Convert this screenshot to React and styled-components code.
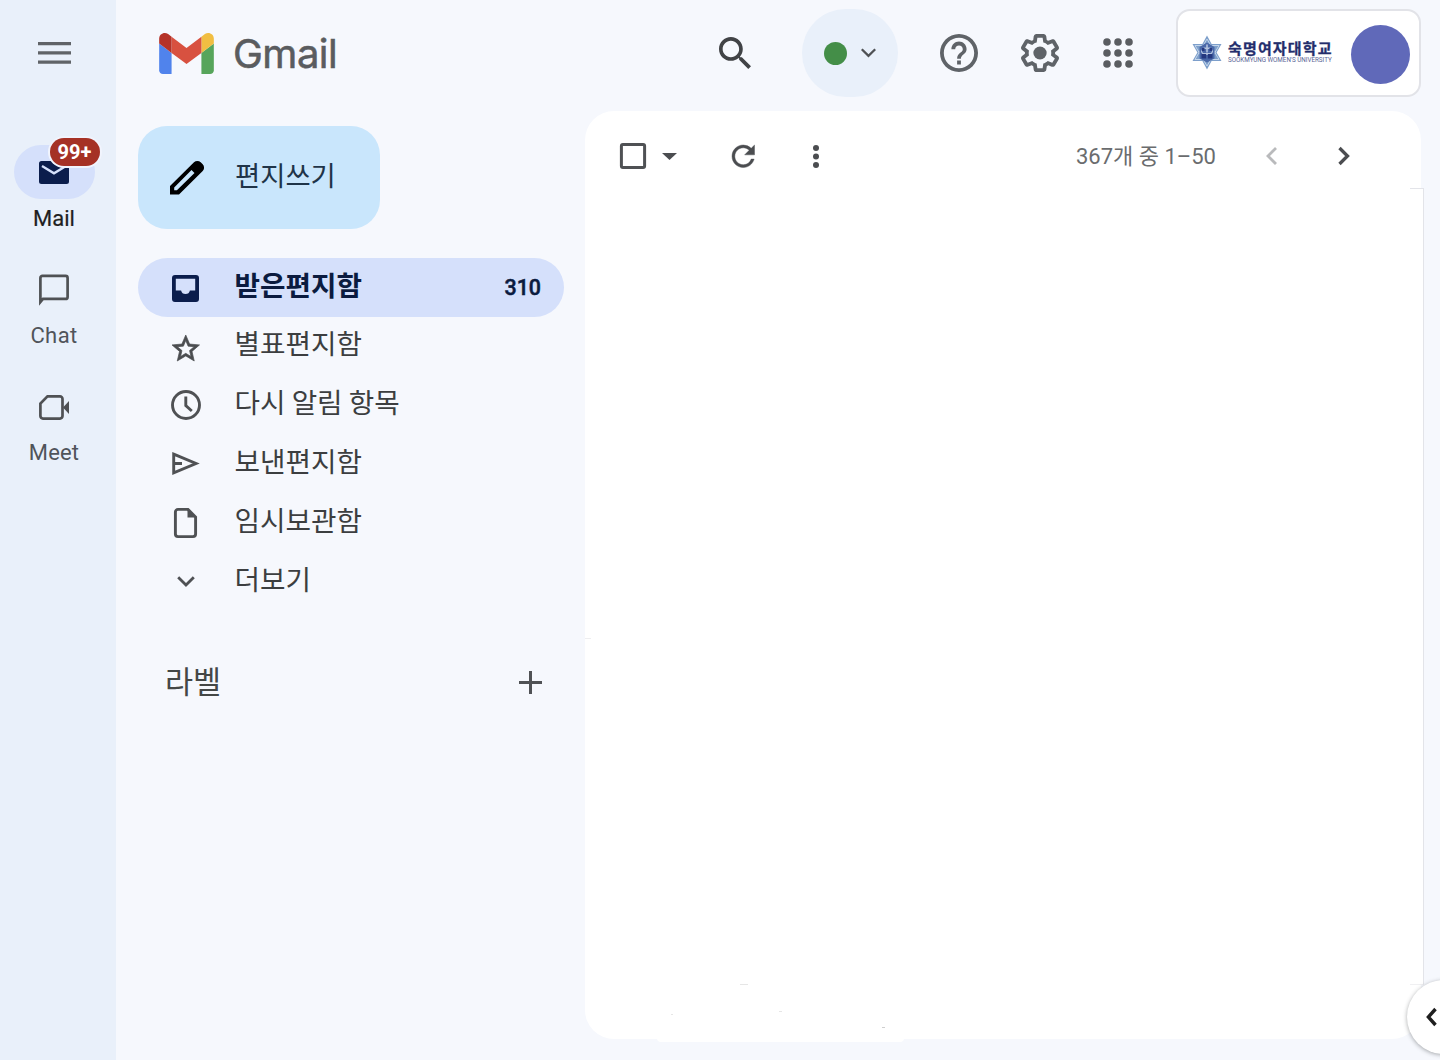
import React from "react";
import styled, { createGlobalStyle } from "styled-components";

const Global = createGlobalStyle`
  * { box-sizing: border-box; }
  html, body { margin: 0; padding: 0; }
  body { overflow: hidden; font-family: Roboto, "Noto Sans CJK KR", sans-serif; color: #444746; }
  button { border: 0; padding: 0; margin: 0; background: none; font: inherit; color: inherit; }
`;

const Page = styled.div`
  position: relative;
  display: flex;
  width: 1440px;
  height: 1060px;
  overflow: hidden;
  background: #f6f8fd;
`;

/* ---------- left rail ---------- */
const Rail = styled.nav`
  width: 116px;
  flex: none;
  display: flex;
  flex-direction: column;
  align-items: center;
  padding-right: 8px;
  background: #e9f0fa;
`;
const MenuButton = styled.button`
  height: 105px;
  display: flex;
  align-items: center;
  margin-bottom: 40px;
`;
const RailItem = styled.a`
  height: 117.5px;
  display: flex;
  flex-direction: column;
  align-items: center;
  color: ${(p) => (p.$active ? "#1f1f1f" : "#50545a")};
`;
const RailPill = styled.span`
  position: relative;
  width: 81px;
  height: 54px;
  border-radius: 27px;
  display: flex;
  align-items: center;
  justify-content: center;
  background: ${(p) => (p.$active ? "#d5e0fb" : "transparent")};
`;
const RailLabel = styled.span`
  font-size: 22px;
  line-height: 26px;
  margin-top: ${(p) => (p.$active ? 7 : 6)}px;
  letter-spacing: ${(p) => p.$spacing || "0"};
  -webkit-text-stroke: ${(p) => (p.$active ? "0.2px #1f1f1f" : "0")};
`;
const Badge = styled.span`
  position: absolute;
  left: 36px;
  top: -7px;
  width: 50px;
  height: 28px;
  border-radius: 14px;
  background: #a53125;
  box-shadow: 0 0 0 2px #f1f4fd;
  color: #fff;
  font-size: 20px;
  font-weight: 700;
  line-height: 29px;
  text-align: center;
`;

/* ---------- header ---------- */
const Body = styled.div`
  flex: 1;
  display: flex;
  flex-direction: column;
`;
const Header = styled.header`
  height: 111px;
  display: flex;
  align-items: flex-start;
  padding: 9px 19px 0 43px;
`;
const Brand = styled.div`
  height: 88px;
  width: 560px;
  display: flex;
  align-items: center;
  gap: 19px;
`;
const BrandName = styled.span`
  font-family: Inter, sans-serif;
  font-size: 40px;
  line-height: 48px;
  padding-top: 2px;
  letter-spacing: -0.5px;
  color: #5a5c5f;
  -webkit-text-stroke: 0.6px #5a5c5f;
`;
const HeaderIcon = styled.button`
  height: 88px;
  display: flex;
  align-items: center;
  margin-right: ${(p) => p.$after}px;
`;
const Status = styled.button`
  width: 96px;
  height: 88px;
  border-radius: 46px;
  background: #e9f0fa;
  display: flex;
  align-items: center;
  padding-left: 22px;
  gap: 14px;
  margin-right: 42px;
`;
const Dot = styled.span`
  width: 23px;
  height: 23px;
  border-radius: 50%;
  background: #448e48;
`;
const Account = styled.div`
  width: 245px;
  height: 88px;
  border: 2px solid #e2e3e8;
  border-radius: 14px;
  background: #fff;
  display: flex;
  align-items: center;
  padding: 2px 9px 0 14px;
`;
const School = styled.div`
  width: 105px;
  margin: 0 18px 4px 6px;
  display: flex;
  flex-direction: column;
  gap: 1px;
  white-space: nowrap;
  color: #232d6c;
`;
const SchoolName = styled.span`
  font-family: "Noto Sans CJK KR", sans-serif;
  font-weight: 700;
  font-size: 15px;
  line-height: 15px;
  letter-spacing: 1.15px;
  -webkit-text-stroke: 0.3px #232d6c;
`;
const SchoolSub = styled.span`
  font-family: Roboto, sans-serif;
  font-size: 6.3px;
  line-height: 8px;
  letter-spacing: -0.02px;
  color: #5a6596;
`;
const Avatar = styled.span`
  width: 59px;
  height: 59px;
  flex: none;
  border-radius: 50%;
  background: #6069b9;
`;

/* ---------- sidebar ---------- */
const Content = styled.div`
  flex: 1;
  display: flex;
`;
const Sidebar = styled.aside`
  width: 469px;
  flex: none;
  padding: 15px 21px 0 22px;
`;
const Compose = styled.button`
  width: 242px;
  height: 103px;
  border-radius: 29px;
  background: #c9e6fc;
  display: flex;
  align-items: center;
  padding-left: 31.5px;
  gap: 30.5px;
  margin-bottom: 29px;
  color: #1f3448;
`;
const NavRow = styled.a`
  height: 58.8px;
  border-radius: 29.4px;
  display: flex;
  align-items: center;
  padding: 0 23px 0 31px;
  background: ${(p) => (p.$active ? "#d5e0fb" : "transparent")};
  color: ${(p) => (p.$active ? "#0b1b3f" : "#3c3e40")};
`;
const IconSlot = styled.span`
  width: 33px;
  height: 34px;
  margin-right: 32.5px;
  display: flex;
  align-items: center;
  justify-content: center;
  padding-top: ${(p) => p.$drop || 0}px;
`;
const KoText = styled.span`
  flex: ${(p) => (p.$grow ? 1 : "none")};
  font-family: "Noto Sans CJK KR", sans-serif;
  font-size: ${(p) => p.$size || 27.7}px;
  font-weight: ${(p) => (p.$bold ? 700 : 400)};
  line-height: 34px;
  padding-bottom: ${(p) => p.$lift ?? 7}px;
  text-align: left;
`;
const Count = styled.span`
  font-size: 21.4px;
  line-height: 26px;
  font-weight: 500;
  padding-top: 1px;
  -webkit-text-stroke: 0.5px #0b1b3f;
`;
const LabelsHead = styled.div`
  display: flex;
  align-items: center;
  height: 50px;
  margin-top: 47px;
  padding: 0 22px 0 27px;
`;

/* ---------- message panel ---------- */
const Panel = styled.main`
  position: relative;
  width: 836px;
  height: 928px;
  border-radius: 29px;
  background: #fff;
`;
const Toolbar = styled.div`
  height: 90px;
  display: flex;
  align-items: center;
  padding: 0 71px 0 35px;
`;
const Tool = styled.button`
  display: flex;
  margin-right: ${(p) => p.$after || 0}px;
`;
const Range = styled.span`
  margin-left: auto;
  margin-right: 50px;
  padding-top: 2px;
  font-family: Roboto, "Noto Sans CJK KR", sans-serif;
  font-size: 22px;
  line-height: 30px;
  color: #6a6c6e;
  white-space: nowrap;
`;
const EdgeStrip = styled.div`
  position: absolute;
  left: 825px;
  top: 77px;
  width: 14px;
  height: 797px;
  background: #fff;
  border: 1px solid #e3e4e9;
  border-left: 0;
  border-bottom-color: #f0f0f2;
`;
const BottomPatch = styled.div`
  position: absolute;
  left: 72px;
  top: 920px;
  width: 247px;
  height: 11px;
  border-radius: 0 0 4px 4px;
  background: #fff;
`;
const Speck = styled.span`
  position: absolute;
  left: ${(p) => p.$x}px;
  top: ${(p) => p.$y}px;
  width: ${(p) => p.$w}px;
  height: 1px;
  background: ${(p) => p.$c || "#e6e6e6"};
`;
const SideToggle = styled.button`
  position: absolute;
  left: 1407px;
  top: 980px;
  width: 74px;
  height: 74px;
  border-radius: 50%;
  background: #fff;
  box-shadow: 0 1px 4px rgba(60, 64, 67, 0.45);
  display: flex;
  align-items: center;
  padding-left: 19px;
`;

const Svg = styled.svg`
  display: block;
  flex: none;
  overflow: visible;
`;
const Glyph = ({ w, h, box, color = "#4b4d50", edge = 0, d, children }) => (
  <Svg width={w} height={h} viewBox={box || `0 0 ${w} ${h}`} fill={color} stroke={edge ? color : "none"} strokeWidth={edge} preserveAspectRatio="none" aria-hidden="true">
    {d && <path d={d} />}
    {children}
  </Svg>
);
const Line = ({ w, h, d, color = "#4f5154", s = 2.8, children }) => (
  <Svg width={w} height={h} viewBox={`0 0 ${w} ${h}`} fill="none" stroke={color} strokeWidth={s} aria-hidden="true">
    {d && <path d={d} />}
    {children}
  </Svg>
);

const GmailLogo = () => (
  <Svg width="55" height="41" viewBox="52 42 88 66">
    <path fill="#5083ec" d="M58 108h14V74L52 59v43c0 3.32 2.69 6 6 6" />
    <path fill="#57a55b" d="M120 108h14c3.32 0 6-2.69 6-6V59l-20 15" />
    <path fill="#f1be42" d="M120 48v26l20-15v-8c0-7.42-8.47-11.65-14.4-7.2" />
    <path fill="#d85140" d="M72 74V48l24 18 24-18v26L96 92" />
    <path fill="#b53228" d="M52 51v8l20 15V48l-5.6-4.2c-5.94-4.45-14.4-.22-14.4 7.2" />
  </Svg>
);

const Emblem = () => (
  <Svg width="30" height="34" viewBox="0 1.500 30 34">
    <path fill="#7d9fcb" d="M15 0l4.6 8.4H29.5L24.6 17l4.900 8.600h-9.900L15 34l-4.600-8.400H.5L5.400 17 .5 8.400h9.900z" />
    <path fill="none" stroke="#c3d5ea" strokeWidth="1" d="M15 3.500L27 24H3zM15 30.500L3 10h24z" />
    <path fill="#4a68a8" d="M15 7l7.500 4.500v11.500L15 27l-7.500-4V11.500z" />
    <path fill="#dfe8f5" opacity=".7" d="M14.200 9h1.600v3h2.500v1.600h-2.500V17h-1.600v-3.400h-2.500V12h2.500zM9 14l2 3.500h8l2-3.500v2.500l-2 3h-8l-2-3z" />
    <path fill="#25387f" d="M9.500 18.500h4.700v4.500H9.500zM15.800 18.500h4.700v4.500h-4.700zM10 12.500h2.500v3H10zM17.500 12.500H20v3h-2.500z" />
  </Svg>
);

const navItems = [
  {
    label: "받은편지함", count: "310", active: true, drop: 2,
    icon: <Glyph w={27} h={27} color="#0b1d4c"><path fillRule="evenodd" d="M3 0h21a3 3 0 0 1 3 3v21a3 3 0 0 1-3 3H3a3 3 0 0 1-3-3V3a3 3 0 0 1 3-3zM3.800 3.800v11.700h5.300a4.500 4.500 0 0 0 8.800 0h5.300V3.800z" /></Glyph>,
  },
  {
    label: "별표편지함", drop: 3, lift: 8,
    icon: <Glyph w={27.500} h={26} box="2 2 20 19" edge={0.5} d="M22 9.240l-7.190-.62L12 2 9.190 8.630 2 9.240l5.460 4.730L5.820 21 12 17.270 18.180 21l-1.630-7.030L22 9.240zM12 15.400l-3.760 2.270 1-4.280-3.320-2.880 4.380-.38L12 6.100l1.710 4.040 4.380.38-3.320 2.880 1 4.280L12 15.400z" />,
  },
  { label: "다시 알림 항목", icon: <Line w={30} h={30} s={2.9}><circle cx="15" cy="15" r="13.500" /><path d="M14.800 6.500v9l6 5.500" /></Line> },
  { label: "보낸편지함", icon: <Line w={27} h={23} s={2.9} d="M1.700 2.200L24 11.500 1.700 20.800zM1.700 11.500H10" /> },
  {
    label: "임시보관함", lift: 8,
    icon: <Line w={23} h={30} s={2.9} d="M4 1.400H14L21.600 9V26a2.600 2.600 0 0 1-2.600 2.600H4A2.600 2.600 0 0 1 1.400 26V4A2.600 2.600 0 0 1 4 1.400z"><path d="M13.500 1.400V9.500h8z" fill="#4f5154" stroke="none" /></Line>,
  },
  { label: "더보기", icon: <Line w={18} h={11} s={2.8} d="M1.200 1.200L9 9l7.800-7.800" />, lift: 6 },
];

export default function App() {
  return (
    <>
      <Global />
      <Page>
        <Rail>
          <MenuButton aria-label="menu">
            <Glyph w={33} h={22} color="#606367" d="M0 0h33v3.300H0zM0 9.200h33v3.300H0zM0 18.500h33v3.300H0z" />
          </MenuButton>
          <RailItem $active>
            <RailPill $active>
              <Glyph w={30} h={23} color="#0b1d4c">
                <path d="M2.500 0h25A2.500 2.500 0 0 1 30 2.500v18a2.500 2.500 0 0 1-2.500 2.500h-25A2.500 2.500 0 0 1 0 20.500v-18A2.500 2.500 0 0 1 2.500 0z" />
                <path d="M3 5l12 7.300L27 5" fill="none" stroke="#d5e0fb" strokeWidth="2.400" />
              </Glyph>
              <Badge>99+</Badge>
            </RailPill>
            <RailLabel $active>Mail</RailLabel>
          </RailItem>
          <RailItem>
            <RailPill>
              <Line w={30} h={29} s={2.7} d="M1.400 27V2.900a2 2 0 0 1 2-2h23.200a2 2 0 0 1 2 2v19a2 2 0 0 1-2 2H4z" />
            </RailPill>
            <RailLabel $spacing="0.4px">Chat</RailLabel>
          </RailItem>
          <RailItem>
            <RailPill>
              <Line w={30} h={25} s={2.7}>
                <path d="M8.500 1.400H21a2.500 2.500 0 0 1 2.500 2.500v17.200a2.500 2.500 0 0 1-2.500 2.500H3.900a2.500 2.500 0 0 1-2.500-2.500V8.500z" />
                <path d="M24 12.500L30 6v13z" fill="#4f5154" stroke="none" />
              </Line>
            </RailPill>
            <RailLabel $spacing="0.2px">Meet</RailLabel>
          </RailItem>
        </Rail>

        <Body>
          <Header>
            <Brand>
              <GmailLogo />
              <BrandName>Gmail</BrandName>
            </Brand>
            <HeaderIcon $after={51} aria-label="search">
              <Glyph w={32} h={32} box="3 3 17.490 17.490" color="#414346" d="M15.500 14h-.79l-.28-.27C15.410 12.590 16 11.110 16 9.500 16 5.910 13.090 3 9.500 3S3 5.910 3 9.500 5.910 16 9.500 16c1.610 0 3.090-.59 4.230-1.570l.27.28v.79l5 4.990L20.490 19l-4.990-5zm-6 0C7.010 14 5 11.990 5 9.500S7.010 5 9.500 5 14 7.010 14 9.500 11.990 14 9.500 14z" />
            </HeaderIcon>
            <Status>
              <Dot />
              <Line w={15} h={9} s={2.3} d="M.8.3L7.500 6.900 14.200.3" />
            </Status>
            <HeaderIcon $after={43} aria-label="help">
              <Glyph w={38} h={38} box="2 2 20 20" color="#5f6368" d="M11 18h2v-2h-2v2zm1-16C6.480 2 2 6.480 2 12s4.480 10 10 10 10-4.480 10-10S17.520 2 12 2zm0 18c-4.410 0-8-3.590-8-8s3.590-8 8-8 8 3.590 8 8-3.590 8-8 8zm0-14c-2.210 0-4 1.790-4 4h2c0-1.100.9-2 2-2s2 .9 2 2c0 2-3 1.750-3 5h2c0-2.250 3-2.500 3-5 0-2.210-1.790-4-4-4z" />
            </HeaderIcon>
            <HeaderIcon $after={43.500} aria-label="settings">
              <Glyph w={38} h={38} box="2 1.750 20 20.500" color="#5f6368" d="M13.850 22.250h-3.700c-.74 0-1.360-.54-1.450-1.270l-.27-1.890c-.27-.14-.53-.29-.79-.46l-1.800.72c-.7.26-1.470-.03-1.810-.65L2.200 15.530c-.35-.66-.2-1.440.36-1.880l1.530-1.190c-.01-.15-.02-.3-.02-.46 0-.15.01-.31.02-.46l-1.520-1.190c-.59-.45-.74-1.260-.37-1.880l1.850-3.190c.34-.62 1.110-.9 1.790-.63l1.810.73c.26-.17.52-.32.78-.46l.27-1.910c.09-.7.71-1.250 1.440-1.250h3.700c.74 0 1.360.54 1.450 1.270l.27 1.890c.27.14.53.29.79.46l1.800-.72c.71-.26 1.480.03 1.820.65l1.840 3.180c.36.66.2 1.440-.36 1.880l-1.520 1.190c.01.15.02.3.02.46s-.01.31-.02.46l1.520 1.190c.56.45.72 1.230.37 1.860l-1.860 3.220c-.34.62-1.110.9-1.800.63l-1.800-.72c-.26.17-.52.32-.78.46l-.27 1.910c-.1.68-.72 1.220-1.460 1.220zm-3.230-2h2.760l.37-2.550.53-.22c.44-.18.88-.44 1.340-.78l.45-.34 2.380.96 1.380-2.400-2.030-1.580.07-.56c.03-.26.06-.51.06-.78s-.03-.53-.06-.78l-.07-.56 2.030-1.580-1.390-2.400-2.390.96-.45-.35c-.42-.32-.87-.58-1.330-.77l-.52-.22-.37-2.550h-2.760l-.37 2.550-.53.21c-.44.19-.88.44-1.340.79l-.45.33-2.380-.95-1.390 2.390 2.030 1.580-.07.56a7 7 0 0 0-.06.79c0 .26.02.53.06.78l.07.56-2.030 1.580 1.380 2.400 2.390-.96.45.35c.43.33.86.58 1.330.77l.53.22.38 2.550z">
                <circle cx="12" cy="12" r="3.500" />
              </Glyph>
            </HeaderIcon>
            <HeaderIcon $after={43.500} aria-label="apps">
              <Glyph w={30} h={30} color="#5a5d61">
                {[4, 15, 26].map((y) => [4, 15, 26].map((x) => <circle key={`${x}-${y}`} cx={x} cy={y} r="3.800" />))}
              </Glyph>
            </HeaderIcon>
            <Account>
              <Emblem />
              <School>
                <SchoolName>숙명여자대학교</SchoolName>
                <SchoolSub>SOOKMYUNG WOMEN'S UNIVERSITY</SchoolSub>
              </School>
              <Avatar />
            </Account>
          </Header>

          <Content>
            <Sidebar>
              <Compose>
                <Svg width="35" height="34" viewBox="0 0.500 35 34">
                  <path fill="#000" fillRule="evenodd" d="M0 34v-8.500L24 1.800a4.800 4.800 0 0 1 6.700 0l2 2a4.800 4.800 0 0 1 0 6.700L9 34zM4.200 29.800h2.700L24.500 12.500l-3-3L4.200 27z" />
                </Svg>
                <KoText $size={27.4} $lift={7}>편지쓰기</KoText>
              </Compose>
              {navItems.map((item) => (
                <NavRow key={item.label} $active={item.active}>
                  <IconSlot $drop={item.drop}>{item.icon}</IconSlot>
                  <KoText $grow $bold={item.active} $lift={item.lift}>{item.label}</KoText>
                  {item.count && <Count>{item.count}</Count>}
                </NavRow>
              ))}
              <LabelsHead>
                <KoText $grow $size={30.500} $lift={5}>라벨</KoText>
                <Glyph w={23} h={23} color="#505255" d="M10 0h3v10h10v3H13v10h-3V13H0v-3h10z" />
              </LabelsHead>
            </Sidebar>

            <Panel>
              <Toolbar>
                <Tool $after={16} aria-label="select">
                  <Line w={26} h={26} s={3}><rect x="1.400" y="1.400" width="23.200" height="23.200" rx="1.500" /></Line>
                </Tool>
                <Tool $after={54.500} aria-label="select options">
                  <Glyph w={15} h={7} d="M0 0h15L7.500 7z" />
                </Tool>
                <Tool $after={58.500} aria-label="refresh">
                  <Glyph w={22.500} h={22.500} box="4 4 16 16" edge={0.3} d="M17.650 6.350A7.958 7.958 0 0012 4c-4.420 0-7.990 3.580-7.990 8s3.570 8 7.990 8c3.730 0 6.840-2.550 7.730-6h-2.080A5.990 5.990 0 0112 18c-3.310 0-6-2.690-6-6s2.690-6 6-6c1.660 0 3.140.69 4.220 1.780L13 11h7V4l-2.350 2.350z" />
                </Tool>
                <Tool aria-label="more">
                  <Glyph w={6} h={23}><circle cx="3" cy="3" r="3" /><circle cx="3" cy="11.500" r="3" /><circle cx="3" cy="20" r="3" /></Glyph>
                </Tool>
                <Range>367개 중 1–50</Range>
                <Tool $after={61} aria-label="newer"><Line w={11} h={18} color="#b9babc" d="M10 1L2 9l8 8" /></Tool>
                <Tool aria-label="older"><Line w={12} h={18} s={3.3} color="#4b4d50" d="M1.500 1l8 8-8 8" /></Tool>
              </Toolbar>
              <EdgeStrip />
              <BottomPatch />
              <Speck $x={0} $y={527} $w={6} $c="#eeeef0" />
              <Speck $x={155} $y={873} $w={8} />
              <Speck $x={86} $y={903} $w={2} />
              <Speck $x={194} $y={900} $w={3} />
              <Speck $x={297} $y={916} $w={3} $c="#cfcfcf" />
            </Panel>
          </Content>
        </Body>
        <SideToggle aria-label="show side panel">
          <Line w={10} h={18} s={3.4} color="#1f1f1f" d="M9.500 1L2.400 9l7.100 8" />
        </SideToggle>
      </Page>
    </>
  );
}
